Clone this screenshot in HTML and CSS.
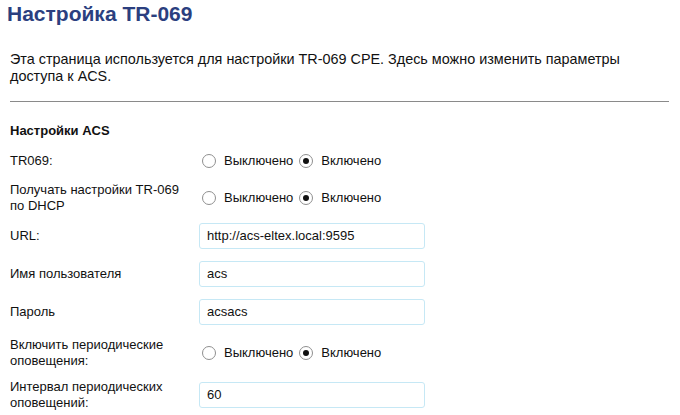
FILE: index.html
```html
<!DOCTYPE html>
<html lang="ru">
<head>
<meta charset="utf-8">
<title>Настройка TR-069</title>
<link rel="stylesheet" href="styles.css">
</head>
<body>
<h1 class="title">Настройка TR-069</h1>
<div class="content">
  <p class="intro">Эта страница используется для настройки TR-069 CPE. Здесь можно изменить параметры доступа к ACS.</p>
  <hr class="divider">
  <h2 class="section">Настройки ACS</h2>
  <div class="form">
    <div class="label">TR069:</div>
    <div class="field">
      <label class="opt"><span class="radio"></span>Выключено</label>
      <label class="opt"><span class="radio checked"></span>Включено</label>
    </div>

    <div class="label">Получать настройки TR-069 по DHCP</div>
    <div class="field">
      <label class="opt"><span class="radio"></span>Выключено</label>
      <label class="opt"><span class="radio checked"></span>Включено</label>
    </div>

    <div class="label">URL:</div>
    <div class="field"><div class="input">http://acs-eltex.local:9595</div></div>

    <div class="label">Имя пользователя</div>
    <div class="field"><div class="input">acs</div></div>

    <div class="label">Пароль</div>
    <div class="field"><div class="input">acsacs</div></div>

    <div class="label">Включить периодические оповещения:</div>
    <div class="field">
      <label class="opt"><span class="radio"></span>Выключено</label>
      <label class="opt"><span class="radio checked"></span>Включено</label>
    </div>

    <div class="label">Интервал периодических оповещений:</div>
    <div class="field"><div class="input">60</div></div>
  </div>
</div>
</body>
</html>
```
FILE: styles.css
```css
html, body {
  margin: 0;
  padding: 0;
  background: #ffffff;
}
body {
  font-family: "Liberation Sans", Arial, sans-serif;
  font-size: 13px;
  line-height: 16px;
  color: #111111;
}
.title {
  margin: 0;
  padding: 2px 7px 0;
  font-size: 21px;
  line-height: 24px;
  font-weight: bold;
  color: #2b3f7f;
}
.content {
  padding: 0 11px 0 10px;
}
.intro {
  margin: 25px 0 0;
  width: 630px;
  font-size: 14.4px;
  line-height: 17px;
}
.divider {
  margin: 16px 0 0;
  border: 0;
  border-top: 1px solid #8a8a8a;
  height: 0;
}
.section {
  margin: 21px 0 0;
  font-size: 13px;
  line-height: 16px;
  font-weight: bold;
}
.form {
  display: grid;
  grid-template-columns: 190px 1fr;
  grid-template-rows: 36px 38px 38px 38px 38px 44px 40px;
  margin-top: 4px;
  align-items: center;
}
.label {
  width: 170px;
}
.field {
  display: flex;
  align-items: center;
}
.opt {
  display: flex;
  align-items: center;
  margin-right: 4px;
}
.radio {
  width: 12px;
  height: 12px;
  border: 1px solid #8f8f8f;
  border-radius: 50%;
  margin: 0 8px 0 2px;
  position: relative;
  background: #fff;
}
.radio.checked::after {
  content: "";
  position: absolute;
  left: 3px;
  top: 3px;
  width: 6px;
  height: 6px;
  border-radius: 50%;
  background: #111;
}
.input {
  box-sizing: border-box;
  width: 226px;
  height: 26px;
  margin-left: -1px;
  padding: 0 7px;
  border: 1px solid #c6e8f5;
  border-radius: 3px;
  line-height: 24px;
  font-size: 13px;
  color: #111;
}
```
